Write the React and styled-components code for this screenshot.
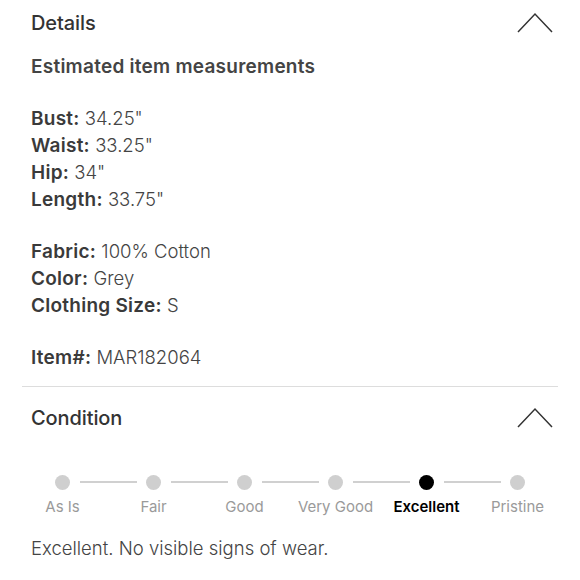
import styled, { createGlobalStyle } from "styled-components";

const GlobalStyle = createGlobalStyle`
  body {
    margin: 0;
    background: #fff;
    font-family: Inter, "Noto Sans", "Liberation Sans", sans-serif;
    color: #333;
  }
`;

const CONDITIONS = ["As Is", "Fair", "Good", "Very Good", "Excellent", "Pristine"];
const SELECTED = 4;

const Chevron = () => (
  <ChevronSvg width="36" height="21" viewBox="0 0 36 21">
    <polyline points="1,20 18,2 35,20" fill="none" stroke="#333" strokeWidth="1.5" />
  </ChevronSvg>
);

const Detail = ({ label, value }) => (
  <Line>
    <Label>{label}:</Label> {value}
  </Line>
);

const App = () => {
  return (
    <>
      <GlobalStyle />
      <Page>
        <Section>
          <Header>
            <Title>Details</Title>
            <Chevron />
          </Header>
          <Body>
            <Subtitle>Estimated item measurements</Subtitle>
            <Group>
              <Detail label="Bust" value={'34.25"'} />
              <Detail label="Waist" value={'33.25"'} />
              <Detail label="Hip" value={'34"'} />
              <Detail label="Length" value={'33.75"'} />
            </Group>
            <Group>
              <Detail label="Fabric" value="100% Cotton" />
              <Detail label="Color" value="Grey" />
              <Detail label="Clothing Size" value="S" />
            </Group>
            <Group>
              <Detail label="Item#" value="MAR182064" />
            </Group>
          </Body>
        </Section>
        <Divider />
        <Section>
          <Header tall>
            <Title>Condition</Title>
            <Chevron />
          </Header>
        </Section>
        <Stepper>
          {CONDITIONS.map((name, index) => (
            <Step key={name} last={index === CONDITIONS.length - 1}>
              <Dot active={index === SELECTED} />
              <StepLabel active={index === SELECTED}>{name}</StepLabel>
            </Step>
          ))}
        </Stepper>
        <Section>
          <Note>Excellent. No visible signs of wear.</Note>
        </Section>
      </Page>
    </>
  );
};

const Page = styled.div`
  width: 580px;
  height: 580px;
  overflow: hidden;
`;

const Section = styled.div`
  padding: 0 22px 0 31px;
`;

const Header = styled.div`
  display: flex;
  align-items: center;
  justify-content: space-between;
  height: ${({ tall }) => (tall ? "62px" : "44px")};
  padding-top: ${({ tall }) => (tall ? "0" : "1px")};
  padding-right: 5px;
`;

const Title = styled.h2`
  margin: 0;
  font-size: 20px;
  font-weight: 500;
  color: #333;
  letter-spacing: -0.1px;
`;

const ChevronSvg = styled.svg`
  display: block;
  margin-top: -1px;
`;

const Body = styled.div`
  display: flex;
  flex-direction: column;
  gap: 25px;
  padding-top: 8px;
  padding-bottom: 15px;
`;

const Subtitle = styled.div`
  font-size: 19px;
  font-weight: 600;
  line-height: 27px;
  letter-spacing: 0.25px;
  color: #444;
`;

const Group = styled.div`
  display: flex;
  flex-direction: column;
`;

const Line = styled.div`
  font-size: 18.5px;
  line-height: 27px;
  font-weight: 300;
  color: #444;
`;

const Label = styled.span`
  font-size: 19px;
  font-weight: 600;
  letter-spacing: 0.25px;
  color: #3a3a3a;
`;

const Divider = styled.hr`
  margin: 0 22px;
  border: none;
  border-top: 1px solid #ddd;
`;

const Stepper = styled.div`
  display: grid;
  grid-template-columns: repeat(6, 91px);
  justify-content: center;
  padding-top: 26px;
`;

const Step = styled.div`
  position: relative;
  display: flex;
  flex-direction: column;
  align-items: center;
  gap: 8px;

  &::after {
    content: "";
    display: ${({ last }) => (last ? "none" : "block")};
    position: absolute;
    top: 6px;
    left: calc(50% + 17px);
    width: 57px;
    height: 2px;
    background: #d0d0d0;
  }
`;

const Dot = styled.span`
  width: 15px;
  height: 15px;
  border-radius: 50%;
  background: ${({ active }) => (active ? "#000" : "#cfcfcf")};
`;

const StepLabel = styled.span`
  font-size: 15px;
  line-height: 18px;
  font-weight: ${({ active }) => (active ? 600 : 400)};
  color: ${({ active }) => (active ? "#000" : "#9a9a9a")};
  white-space: nowrap;
`;

const Note = styled.p`
  margin: 19px 0 0;
  font-size: 18.5px;
  line-height: 27px;
  font-weight: 300;
  color: #444;
`;

export default App;
